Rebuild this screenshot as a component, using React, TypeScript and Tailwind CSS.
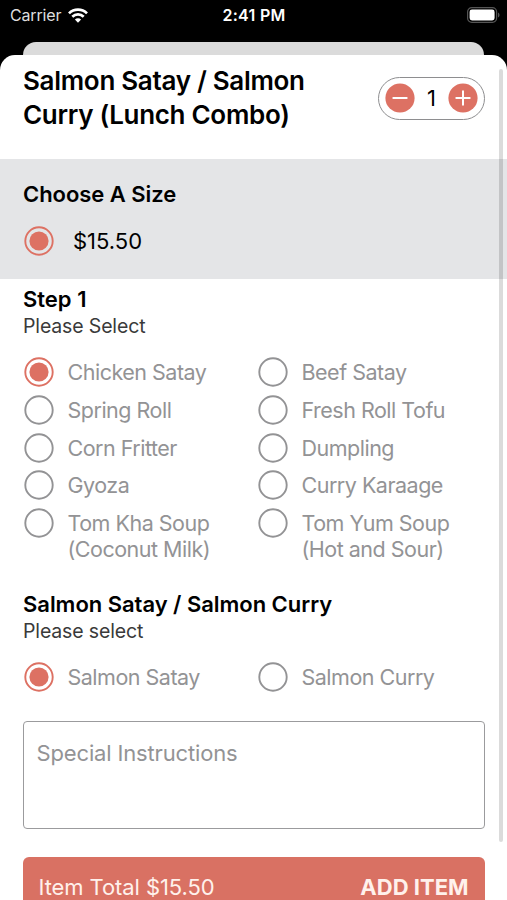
import { useState } from "react";

const starters = [
  { id: "chicken-satay", lines: ["Chicken Satay"] },
  { id: "beef-satay", lines: ["Beef Satay"] },
  { id: "spring-roll", lines: ["Spring Roll"] },
  { id: "fresh-roll-tofu", lines: ["Fresh Roll Tofu"] },
  { id: "corn-fritter", lines: ["Corn Fritter"] },
  { id: "dumpling", lines: ["Dumpling"] },
  { id: "gyoza", lines: ["Gyoza"] },
  { id: "curry-karaage", lines: ["Curry Karaage"] },
  { id: "tom-kha", lines: ["Tom Kha Soup", "(Coconut Milk)"] },
  { id: "tom-yum", lines: ["Tom Yum Soup", "(Hot and Sour)"] },
];

const mains = [
  { id: "salmon-satay", lines: ["Salmon Satay"] },
  { id: "salmon-curry", lines: ["Salmon Curry"] },
];

type Option = { id: string; lines: string[] };

function Radio({ checked }: { checked: boolean }) {
  return (
    <svg viewBox="0 0 30 30" className="size-[30px] shrink-0" fill="none">
      <circle cx="15" cy="15" r="13.7" strokeWidth="1.9" className={checked ? "stroke-[#dd7163]" : "stroke-[#939395]"} />
      {checked ? <circle cx="15" cy="15" r="9.6" className="fill-[#dd7163]" /> : null}
    </svg>
  );
}

function OptionGrid({ options, value, onChange }: { options: Option[]; value: string; onChange: (id: string) => void }) {
  return (
    <div className="grid grid-cols-[234px_1fr] gap-y-[7.75px]">
      {options.map((option) => (
        <button key={option.id} onClick={() => onChange(option.id)} className="flex items-start gap-[13.5px] text-left">
          <Radio checked={value === option.id} />
          <span className="pt-[2px] text-[21.5px] leading-[26px] tracking-[-0.5px] text-[#939395]">
            {option.lines.map((line) => (
              <span key={line} className="block whitespace-nowrap">{line}</span>
            ))}
          </span>
        </button>
      ))}
    </div>
  );
}

function StatusBar() {
  return (
    <header className="grid h-[30px] grid-cols-3 items-center pl-[10px] pr-[7px] text-white">
      <div className="flex items-center gap-[7px]">
        <span className="text-[16px] leading-5 tracking-[-0.15px] text-[#dedede]">Carrier</span>
        <svg viewBox="0 0 20 15" className="h-[15px] w-5" fill="none" stroke="white" strokeWidth="2.7">
          <path d="M1 5.4a12.8 12.8 0 0 1 18 0" />
          <path d="M4.3 8.8a8.1 8.1 0 0 1 11.4 0" />
          <path d="M10 14.8 6.9 11.6a4.4 4.4 0 0 1 6.2 0Z" fill="white" stroke="none" />
        </svg>
      </div>
      <span className="pr-[2px] text-center text-[16px] font-semibold leading-5 tracking-[0.3px]">2:41 PM</span>
      <svg viewBox="0 0 33 16" className="h-4 w-[33px] justify-self-end" fill="none">
        <rect x="0.6" y="0.6" width="29" height="14.8" rx="4.2" stroke="#555555" strokeWidth="1.2" />
        <rect x="2.6" y="2.6" width="25" height="10.8" rx="2.4" fill="white" />
        <path d="M31 5.5c2 .8 2 4.2 0 5Z" fill="#555555" />
      </svg>
    </header>
  );
}

function Stepper() {
  const [count, setCount] = useState(1);

  return (
    <div className="mt-[12.5px] flex h-[43px] w-[107px] items-center justify-between rounded-full border border-[#8e8e90] px-[6px]">
      <button onClick={() => setCount(Math.max(1, count - 1))} aria-label="Decrease">
        <svg viewBox="0 0 30 30" className="size-[30px]" stroke="white" strokeWidth="2" strokeLinecap="round">
          <circle cx="15" cy="15" r="14.6" fill="#dd7163" stroke="none" />
          <path d="M8.3 15h13.4" />
        </svg>
      </button>
      <span className="text-[22px] leading-7">{count}</span>
      <button onClick={() => setCount(count + 1)} aria-label="Increase">
        <svg viewBox="0 0 30 30" className="size-[30px]" stroke="white" strokeWidth="2" strokeLinecap="round">
          <circle cx="15" cy="15" r="14.6" fill="#dd7163" stroke="none" />
          <path d="M8.3 15h13.4M15 8.3v13.4" />
        </svg>
      </button>
    </div>
  );
}

export default function App() {
  const [starter, setStarter] = useState("chicken-satay");
  const [main, setMain] = useState("salmon-satay");

  return (
    <div className="flex h-[900px] w-[507px] flex-col overflow-hidden bg-black font-['Inter',sans-serif] text-black">
      <StatusBar />
      <div className="mx-[23px] mt-[11.5px] h-[13.5px] shrink-0 rounded-t-[13px] bg-[#dbdbdb]" />

      <main className="relative h-[845px] shrink-0 rounded-t-[15px] bg-white">
        <div className="flex h-[104px] items-start justify-between pl-[23px] pr-[22px] pt-[9px]">
          <h1 className="text-[26px] font-semibold leading-[34px] tracking-[-0.3px]">
            Salmon Satay / Salmon
            <br />
            Curry (Lunch Combo)
          </h1>
          <Stepper />
        </div>

        <section className="h-[120px] bg-[#e4e5e7] px-[23px] pt-[21px]">
          <h2 className="text-[22px] font-semibold leading-7 tracking-[-0.05px]">Choose A Size</h2>
          <div className="mt-[18px] flex items-center gap-[19px] pl-[1px]">
            <Radio checked />
            <span className="text-[22px] leading-7">$15.50</span>
          </div>
        </section>

        <section className="pl-[23px] pt-[6px]">
          <h2 className="text-[22px] font-semibold leading-7">Step 1</h2>
          <p className="text-[19.5px] leading-[26px] tracking-[-0.15px] text-[#3a3a3a]">Please Select</p>
          <div className="mt-[18px] pl-[1px]">
            <OptionGrid options={starters} value={starter} onChange={setStarter} />
          </div>
        </section>

        <section className="pl-[23px] pt-[28px]">
          <h2 className="text-[22px] font-semibold leading-7 tracking-[-0.03px]">Salmon Satay / Salmon Curry</h2>
          <p className="text-[19.5px] leading-[26px] tracking-[-0.15px] text-[#3a3a3a]">Please select</p>
          <div className="mt-[18px] pl-[1px]">
            <OptionGrid options={mains} value={main} onChange={setMain} />
          </div>
        </section>

        <div className="px-[22.5px] pt-[29px]">
          <textarea
            placeholder="Special Instructions"
            className="block h-[108px] w-full resize-none rounded-[4px] border-[1.5px] border-[#9b9b9d] px-[13px] pt-[17px] text-[22px] leading-7 tracking-[-0.15px] outline-none placeholder:text-[#939395]"
          />
          <button className="mt-7 flex h-[60px] w-full items-center justify-between rounded-[6px] bg-[#d97163] px-4 text-[22px] leading-7 text-[#fff1ec]">
            <span className="tracking-[-0.08px]">Item Total $15.50</span>
            <span className="font-bold">ADD ITEM</span>
          </button>
        </div>

        {/* scroll indicator */}
        <div className="absolute right-[4px] top-[14px] h-[773px] w-[4px] rounded-full bg-black/14" />
      </main>
    </div>
  );
}
